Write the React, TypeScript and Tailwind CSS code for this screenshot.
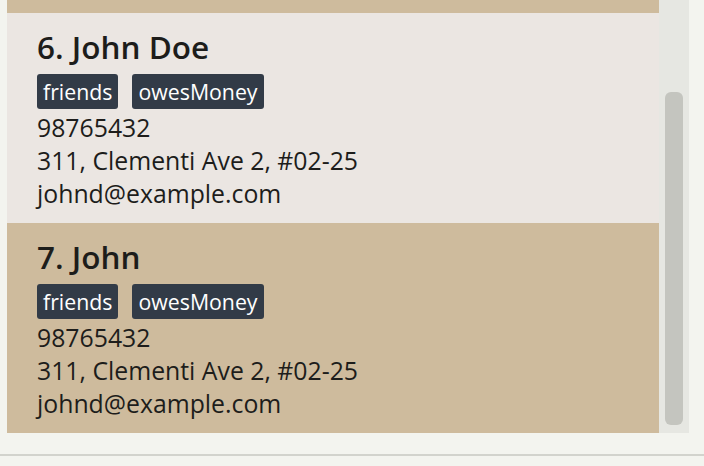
import React from 'react';

const persons = [
  { idx: 6, name: 'John Doe', tags: ['friends', 'owesMoney'], phone: '98765432', address: '311, Clementi Ave 2, #02-25', email: 'johnd@example.com', bg: 'bg-[#ebe6e2]' },
  { idx: 7, name: 'John', tags: ['friends', 'owesMoney'], phone: '98765432', address: '311, Clementi Ave 2, #02-25', email: 'johnd@example.com', bg: 'bg-[#cebb9d]' },
];

export default function App() {
  return (
    <div
      className="w-[704px] h-[466px] bg-[#f3f4ef] flex flex-col overflow-hidden text-[#1d1d1b]"
      style={{ fontFamily: '"Open Sans", "Noto Sans", sans-serif' }}
    >
      <div className="flex h-[433px] pl-[7px]">
        {/* list */}
        <div className="w-[652px] flex flex-col overflow-hidden">
          <div className="h-[13px] shrink-0 bg-[#cebb9d]" />
          {persons.map((p) => (
            <div key={p.idx} className={`h-[210px] shrink-0 ${p.bg} pl-[30px] pt-[17px]`}>
              <div className="text-[31.5px] leading-[34px] font-semibold">
                {p.idx}. {p.name}
              </div>
              <div className="flex gap-[14px] mt-[10px]">
                {p.tags.map((t) => (
                  <span key={t} className="h-[35px] px-[6px] rounded-[3px] bg-[#323b47] text-white text-[21.3px] leading-[35px]">
                    {t}
                  </span>
                ))}
              </div>
              <div className="mt-[2px] text-[24.8px] leading-[33px]">
                <div>{p.phone}</div>
                <div>{p.address}</div>
                <div>{p.email}</div>
              </div>
            </div>
          ))}
        </div>
        {/* scrollbar */}
        <div className="w-[30px] bg-[#e6e7e2] px-[6px] pt-[92px] pb-[8px]">
          <div className="h-full rounded-[6px] bg-[#c4c5bf]" />
        </div>
      </div>
      <div className="h-[21px]" />
      <div className="h-[2px] bg-[#d2d3cd]" />
    </div>
  );
}
